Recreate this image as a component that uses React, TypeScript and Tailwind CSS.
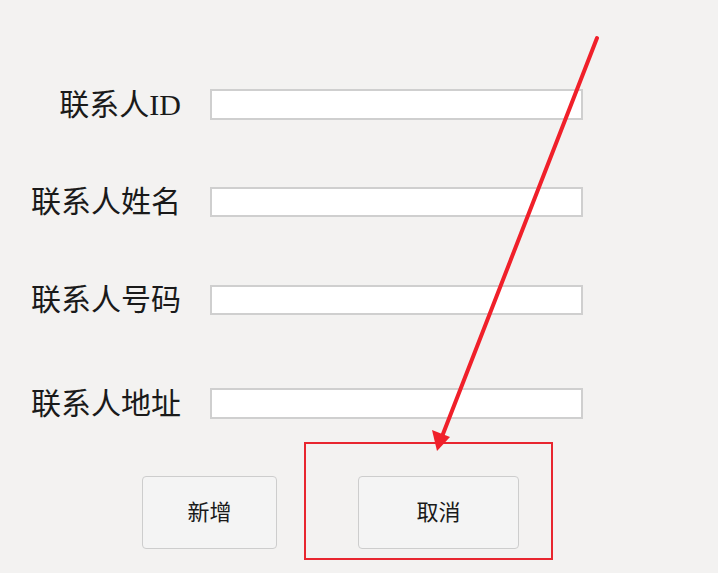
import React from "react";

const rows = [
  { label: "联系人ID", cls: "mt-[89px] h-[31px]" },
  { label: "联系人姓名", cls: "mt-[67px] h-[30px]" },
  { label: "联系人号码", cls: "mt-[68px] h-[30px]" },
  { label: "联系人地址", cls: "mt-[73px] h-[31px]" },
];

export default function App() {
  return (
    <div
      className="relative w-[718px] h-[573px] overflow-hidden bg-[#f3f2f1] text-[#1a1a1a]"
      style={{ fontFamily: '"Liberation Serif", "Noto Sans CJK SC", serif' }}
    >
      <div className="flex flex-col">
        {rows.map((r) => (
          <div key={r.label} className={`flex items-center ${r.cls}`}>
            <div className="w-[181px] text-right text-[30px] leading-none whitespace-nowrap">
              {r.label}
            </div>
            <div className="ml-[29px] w-[373px] h-full bg-white border-2 border-[#cfcfcf]" />
          </div>
        ))}
        <div className="flex items-start mt-[23px]">
          <button className="ml-[142px] mt-[34px] w-[135px] h-[73px] rounded-[4px] border border-[#cdcdcd] bg-[#f4f4f4] text-[22px] text-[#1a1a1a]">
            新增
          </button>
          <div className="ml-[27px] w-[249px] h-[118px] border-2 border-[#e8262f] pl-[52px] pt-[32px]">
            <button className="w-[161px] h-[73px] rounded-[4px] border border-[#cdcdcd] bg-[#f4f4f4] text-[22px] text-[#1a1a1a]">
              取消
            </button>
          </div>
        </div>
      </div>
      <svg className="absolute inset-0 pointer-events-none" width="718" height="573">
        <line x1="597" y1="38" x2="443" y2="434" stroke="#f0202a" strokeWidth="4" strokeLinecap="round" />
        <polygon points="437,451 432,430 450,437" fill="#f0202a" />
      </svg>
    </div>
  );
}
